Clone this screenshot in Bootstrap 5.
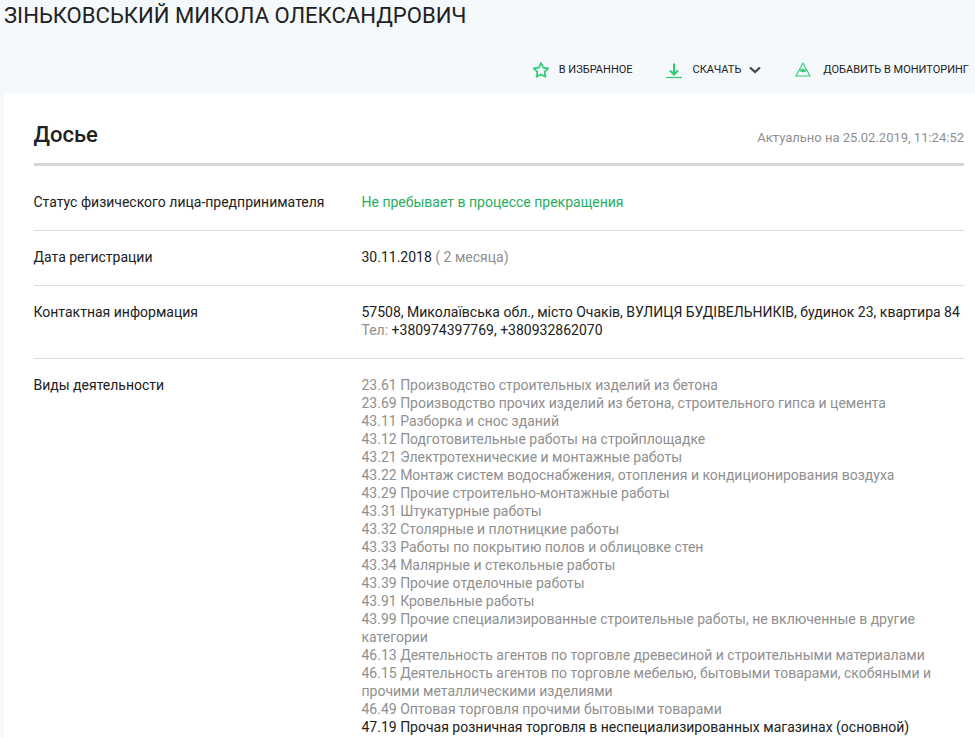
<!DOCTYPE html>
<html lang="ru">

<head>
    <meta charset="UTF-8" />
    <meta name="viewport" content="width=device-width, initial-scale=1" />
    <title>Досье</title>
    <link href="https://cdn.jsdelivr.net/npm/bootstrap@5.3.2/dist/css/bootstrap.min.css" rel="stylesheet" />
    <style>
        html, body { height: 738px; overflow: hidden; }
        body { background: #f5f9fc; font-family: Roboto, "Liberation Sans", sans-serif; color: #212121; font-size: 14px; line-height: 18px; }
        .page-name { font-size: 22.1px; line-height: 28px; font-weight: 400; margin: 0; padding: 1px 0 0 4px; height: 49px; color: #212121; }
        .tools-bar { height: 45px; padding: 0 6px 4px 0; font-size: 11px; color: #212121; }
        .tool-item { color: #212121; text-decoration: none; }
        .tool-star { margin-right: 9px; }
        .tool-down { margin-left: 33px; margin-right: 11px; }
        .tool-chevron { margin-left: 8px; }
        .tool-eye { margin-left: 34px; margin-right: 12px; }
        .dossier-box { background: #fff; margin-left: 4px; padding: 0 11px 0 29.5px; }
        .dossier-head { height: 72px; border-bottom: 3px solid #d6d6d6; padding-top: 27px; }
        .dossier-head h2 { font-size: 22px; line-height: 28px; font-weight: 500; margin: 0; }
        .fresh-date { font-size: 13px; color: #8f8f8f; padding-top: 8px; }
        .info-row { border-bottom: 1px solid #dcdcdc; padding: 17px 0 19px; }
        .info-row-first { padding-top: 27px; }
        .info-row:last-child { border-bottom: 0; }
        .info-label { width: 328px; flex: none; }
        .txt-green { color: #27ae60; }
        .txt-gray { color: #8f8f8f; }
        .kved { color: #8f8f8f; max-width: 580px; }
        .kved-main { color: #212121; }
    </style>
</head>

<body>
    <h1 class="page-name">ЗІНЬКОВСЬКИЙ МИКОЛА ОЛЕКСАНДРОВИЧ</h1>

    <div class="tools-bar d-flex justify-content-end align-items-center">
        <a href="#" class="tool-item d-flex align-items-center">
            <svg class="tool-star" width="18" height="18" viewBox="0 0 18 18" fill="none" stroke="#2ecc71" stroke-width="1.700" stroke-linejoin="round">
                <path d="M9 2l2.200 4.600 5 .7-3.600 3.500.9 5L9 13.400l-4.500 2.400.9-5L1.800 7.300l5-.7z" />
            </svg>
            <span>В ИЗБРАННОЕ</span>
        </a>
        <a href="#" class="tool-item d-flex align-items-center">
            <svg class="tool-down" width="16" height="18" viewBox="0 0 16 18" fill="none" stroke="#2ecc71" stroke-width="2">
                <path d="M8 2.500V13M4 9.500l4 4 4-4" />
                <path d="M0 16.500h16" stroke-width="1.200" />
            </svg>
            <span>СКАЧАТЬ</span>
            <svg class="tool-chevron" width="12" height="8" viewBox="0 0 12 8" fill="none" stroke="#444" stroke-width="2.200">
                <path d="M1 1.500l5 4.500 5-4.500" />
            </svg>
        </a>
        <a href="#" class="tool-item d-flex align-items-center">
            <svg class="tool-eye" width="16" height="16" viewBox="0 0 16 16" fill="none" stroke="#2ecc71" stroke-width="1.100" stroke-linejoin="round">
                <path d="M8 1L15 14H1z" />
                <path d="M5 8.500q3-2.600 6 0q-3 2.600-6 0z" />
                <circle cx="8" cy="8.500" r="1.100" fill="#2ecc71" stroke="none" />
            </svg>
            <span>ДОБАВИТЬ В МОНИТОРИНГ</span>
        </a>
    </div>

    <div class="dossier-box">
        <div class="dossier-head d-flex justify-content-between">
            <h2>Досье</h2>
            <div class="fresh-date">Актуально на 25.02.2019, 11:24:52</div>
        </div>

        <div class="info-row info-row-first d-flex">
            <div class="info-label">Статус физического лица-предпринимателя</div>
            <div class="txt-green">Не пребывает в процессе прекращения</div>
        </div>
        <div class="info-row d-flex">
            <div class="info-label">Дата регистрации</div>
            <div>30.11.2018 <span class="txt-gray">( 2 месяца)</span></div>
        </div>
        <div class="info-row d-flex">
            <div class="info-label">Контактная информация</div>
            <div>
                57508, Миколаївська обл., місто Очаків, ВУЛИЦЯ БУДІВЕЛЬНИКІВ, будинок 23, квартира 84<br />
                <span class="txt-gray">Тел:</span> +380974397769, +380932862070
            </div>
        </div>
        <div class="info-row d-flex">
            <div class="info-label">Виды деятельности</div>
            <div class="kved">
                <div>23.61 Производство строительных изделий из бетона</div>
                <div>23.69 Производство прочих изделий из бетона, строительного гипса и цемента</div>
                <div>43.11 Разборка и снос зданий</div>
                <div>43.12 Подготовительные работы на стройплощадке</div>
                <div>43.21 Электротехнические и монтажные работы</div>
                <div>43.22 Монтаж систем водоснабжения, отопления и кондиционирования воздуха</div>
                <div>43.29 Прочие строительно-монтажные работы</div>
                <div>43.31 Штукатурные работы</div>
                <div>43.32 Столярные и плотницкие работы</div>
                <div>43.33 Работы по покрытию полов и облицовке стен</div>
                <div>43.34 Малярные и стекольные работы</div>
                <div>43.39 Прочие отделочные работы</div>
                <div>43.91 Кровельные работы</div>
                <div>43.99 Прочие специализированные строительные работы, не включенные в другие категории</div>
                <div>46.13 Деятельность агентов по торговле древесиной и строительными материалами</div>
                <div>46.15 Деятельность агентов по торговле мебелью, бытовыми товарами, скобяными и прочими металлическими изделиями</div>
                <div>46.49 Оптовая торговля прочими бытовыми товарами</div>
                <div class="kved-main">47.19 Прочая розничная торговля в неспециализированных магазинах (основной)</div>
            </div>
        </div>
    </div>
    <script src="https://cdn.jsdelivr.net/npm/bootstrap@5.3.2/dist/js/bootstrap.bundle.min.js"></script>
</body>

</html>
